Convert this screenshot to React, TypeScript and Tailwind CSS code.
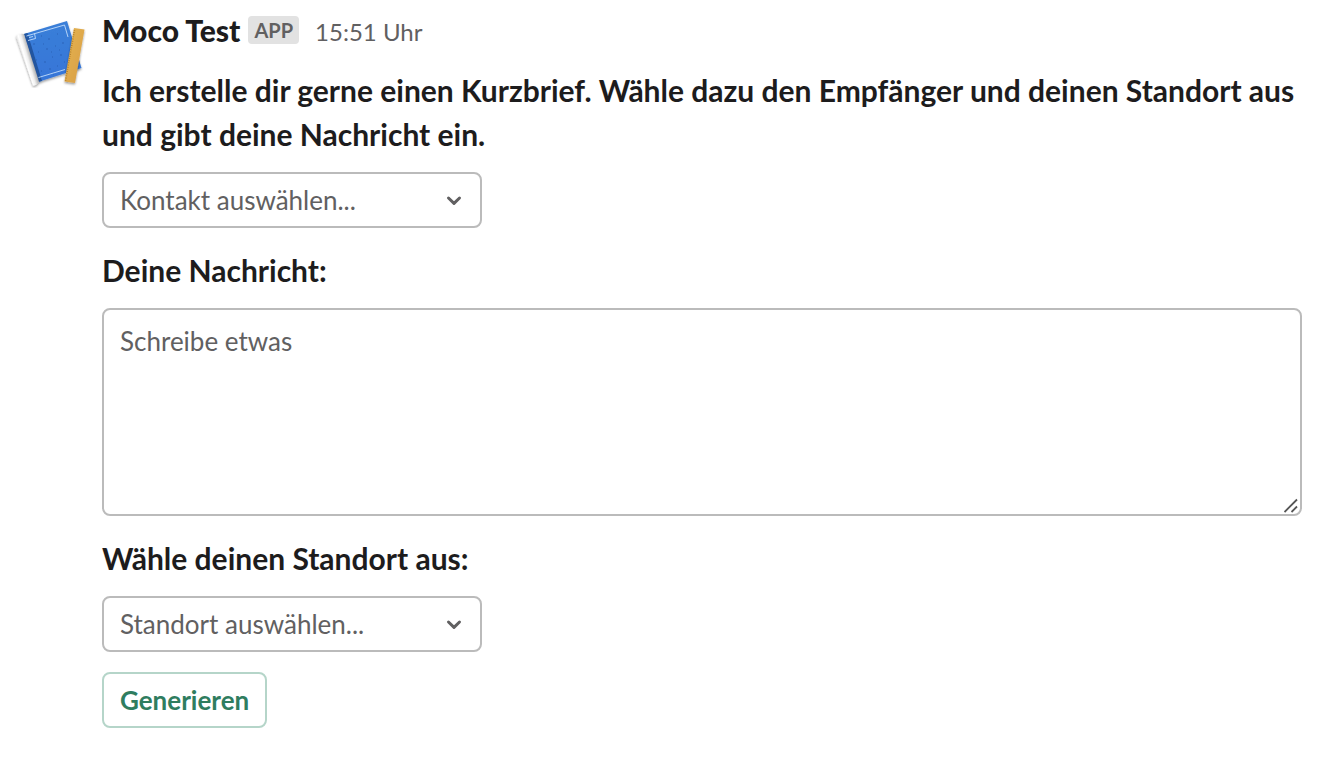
import { useState } from 'react';
import type { FormEvent } from 'react';

const contacts = ['Anna Keller', 'Jonas Meier', 'Lena Schmid'];
const locations = ['Zürich', 'Berlin', 'Wien'];

interface SelectFieldProps {
  label: string;
  placeholder: string;
  options: string[];
  value: string;
  onChange: (value: string) => void;
}

function BlueprintAvatar() {
  return (
    <svg viewBox="0 0 72 72" className="mt-[2px] size-[72px] shrink-0" aria-hidden="true">
      <defs>
        <linearGradient id="cover" x1="0" y1="0" x2="0" y2="1">
          <stop offset="0" stopColor="#3a7fd8" />
          <stop offset="1" stopColor="#3675d8" />
        </linearGradient>
        <linearGradient id="roll" gradientUnits="userSpaceOnUse" x1="8" y1="45" x2="18" y2="42">
          <stop offset="0" stopColor="#d6d6d6" />
          <stop offset="0.35" stopColor="#ffffff" />
          <stop offset="0.6" stopColor="#f0f0f0" />
          <stop offset="1" stopColor="#a9a9a9" />
        </linearGradient>
        <linearGradient id="ruler" x1="0" y1="0" x2="1" y2="1">
          <stop offset="0" stopColor="#e4b452" />
          <stop offset="1" stopColor="#d99e45" />
        </linearGradient>
        <filter id="shadow" x="-20%" y="-20%" width="140%" height="140%">
          <feDropShadow dx="0" dy="1.500" stdDeviation="1.200" floodColor="#000" floodOpacity="0.4" />
        </filter>
      </defs>
      <g filter="url(#shadow)">
        <path d="M10 18 53 5 67.500 52 24 66Z" fill="url(#cover)" />
        <path d="M10 18 13.500 17 28 65 24 66Z" fill="#22549f" />
        <path d="M2 20Q5 17 10 18L25 65.500Q23 69.500 19 69.500Z" fill="url(#roll)" />
      </g>
      {/* Paper grain */}
      <path
        d="M19 28h2M27 20h1M34 23h2M43 18h1M24 36h1M32 33h2M41 30h1M48 27h2M22 44h1M30 46h2M38 41h1M46 39h2M27 55h1M35 53h2M43 50h1M50 46h1M39 58h1M29 28h1M37 36h1M45 34h1"
        fill="none"
        stroke="#2a62b8"
        strokeWidth="1"
      />
      <path
        d="M12.500 20 50.500 9 54 21M24.500 61.500 51 53.500M14 24.500 21.500 22.500 20.500 17.500M15 21.500 19 20.500"
        fill="none"
        stroke="#c2dcfa"
        strokeWidth="0.900"
      />
      <g filter="url(#shadow)">
        <path d="M60 12 70.500 13.500 61 67 50.500 65.500Z" fill="url(#ruler)" />
        <path d="M60.500 14 51.500 65" fill="none" stroke="#a87422" strokeWidth="1.500" strokeDasharray="0.700 1.500" />
      </g>
    </svg>
  );
}

function SelectField({ label, placeholder, options, value, onChange }: SelectFieldProps) {
  return (
    <div className="relative w-[380px] max-w-full">
      <select
        aria-label={label}
        value={value}
        onChange={e => onChange(e.target.value)}
        className="block h-14 w-full appearance-none rounded-lg border-2 border-[#bbbbbb] bg-white pr-12 pl-4 text-[26px] leading-9 text-[#616061]"
      >
        <option value="" disabled>
          {placeholder}
        </option>
        {options.map(option => (
          <option key={option} value={option}>
            {option}
          </option>
        ))}
      </select>
      <svg
        viewBox="0 0 16 16"
        className="pointer-events-none absolute top-5 right-5 size-4"
        fill="none"
        stroke="#616061"
        strokeWidth="3"
        strokeLinecap="round"
        strokeLinejoin="round"
        aria-hidden="true"
      >
        <path d="M2.500 6 8 11.300 13.500 6" />
      </svg>
    </div>
  );
}

export default function App() {
  const [contact, setContact] = useState('');
  const [message, setMessage] = useState('');
  const [location, setLocation] = useState('');

  const handleSubmit = (e: FormEvent) => e.preventDefault();

  return (
    <main className="flex min-h-screen gap-4 bg-white py-[14px] pr-[30px] pl-[14px] font-['Lato',sans-serif] text-[#1d1c1d]">
      <BlueprintAvatar />
      <div className="min-w-0 flex-1">
        {/* Sender */}
        <header className="flex h-8 items-center">
          <h1 className="text-[30px] leading-8 font-black">Moco Test</h1>
          <span className="ml-2 rounded bg-[#e2e2e2] px-[6px] text-[20px] leading-7 font-bold text-[#616061]">APP</span>
          <time dateTime="15:51" className="ml-4 pt-1 text-[24px] leading-8 text-[#616061]">
            15:51 Uhr
          </time>
        </header>

        <form onSubmit={handleSubmit} className="mt-[22px]">
          <p className="text-[30px] leading-[44px] font-bold">
            Ich erstelle dir gerne einen Kurzbrief. Wähle dazu den Empfänger und deinen Standort aus und gibt deine
            Nachricht ein.
          </p>
          <div className="mt-4">
            <SelectField
              label="Kontakt"
              placeholder="Kontakt auswählen..."
              options={contacts}
              value={contact}
              onChange={setContact}
            />
          </div>

          <label htmlFor="message" className="mt-5 block text-[30px] leading-[44px] font-bold">
            Deine Nachricht:
          </label>
          <div className="relative mt-4">
            <textarea
              id="message"
              value={message}
              onChange={e => setMessage(e.target.value)}
              placeholder="Schreibe etwas"
              className="block h-[208px] w-full resize-none rounded-lg border-2 border-[#bbbbbb] px-4 py-3 text-[26px] leading-[38px] placeholder:text-[#616061]"
            />
            <svg
              viewBox="0 0 16 16"
              className="pointer-events-none absolute right-[2px] bottom-[2px] size-4"
              stroke="#555555"
              strokeWidth="1.800"
              aria-hidden="true"
            >
              <path d="M0.500 14 13 1.500M7.500 14 13 8.500" />
            </svg>
          </div>

          <p className="mt-5 text-[30px] leading-[44px] font-bold">Wähle deinen Standort aus:</p>
          <div className="mt-4">
            <SelectField
              label="Standort"
              placeholder="Standort auswählen..."
              options={locations}
              value={location}
              onChange={setLocation}
            />
          </div>

          <button
            type="submit"
            className="mt-5 block h-14 rounded-lg border-2 border-[#b5d5c9] px-4 text-[26px] leading-9 font-bold text-[#2f7d5f]"
          >
            Generieren
          </button>
        </form>
      </div>
    </main>
  );
}
